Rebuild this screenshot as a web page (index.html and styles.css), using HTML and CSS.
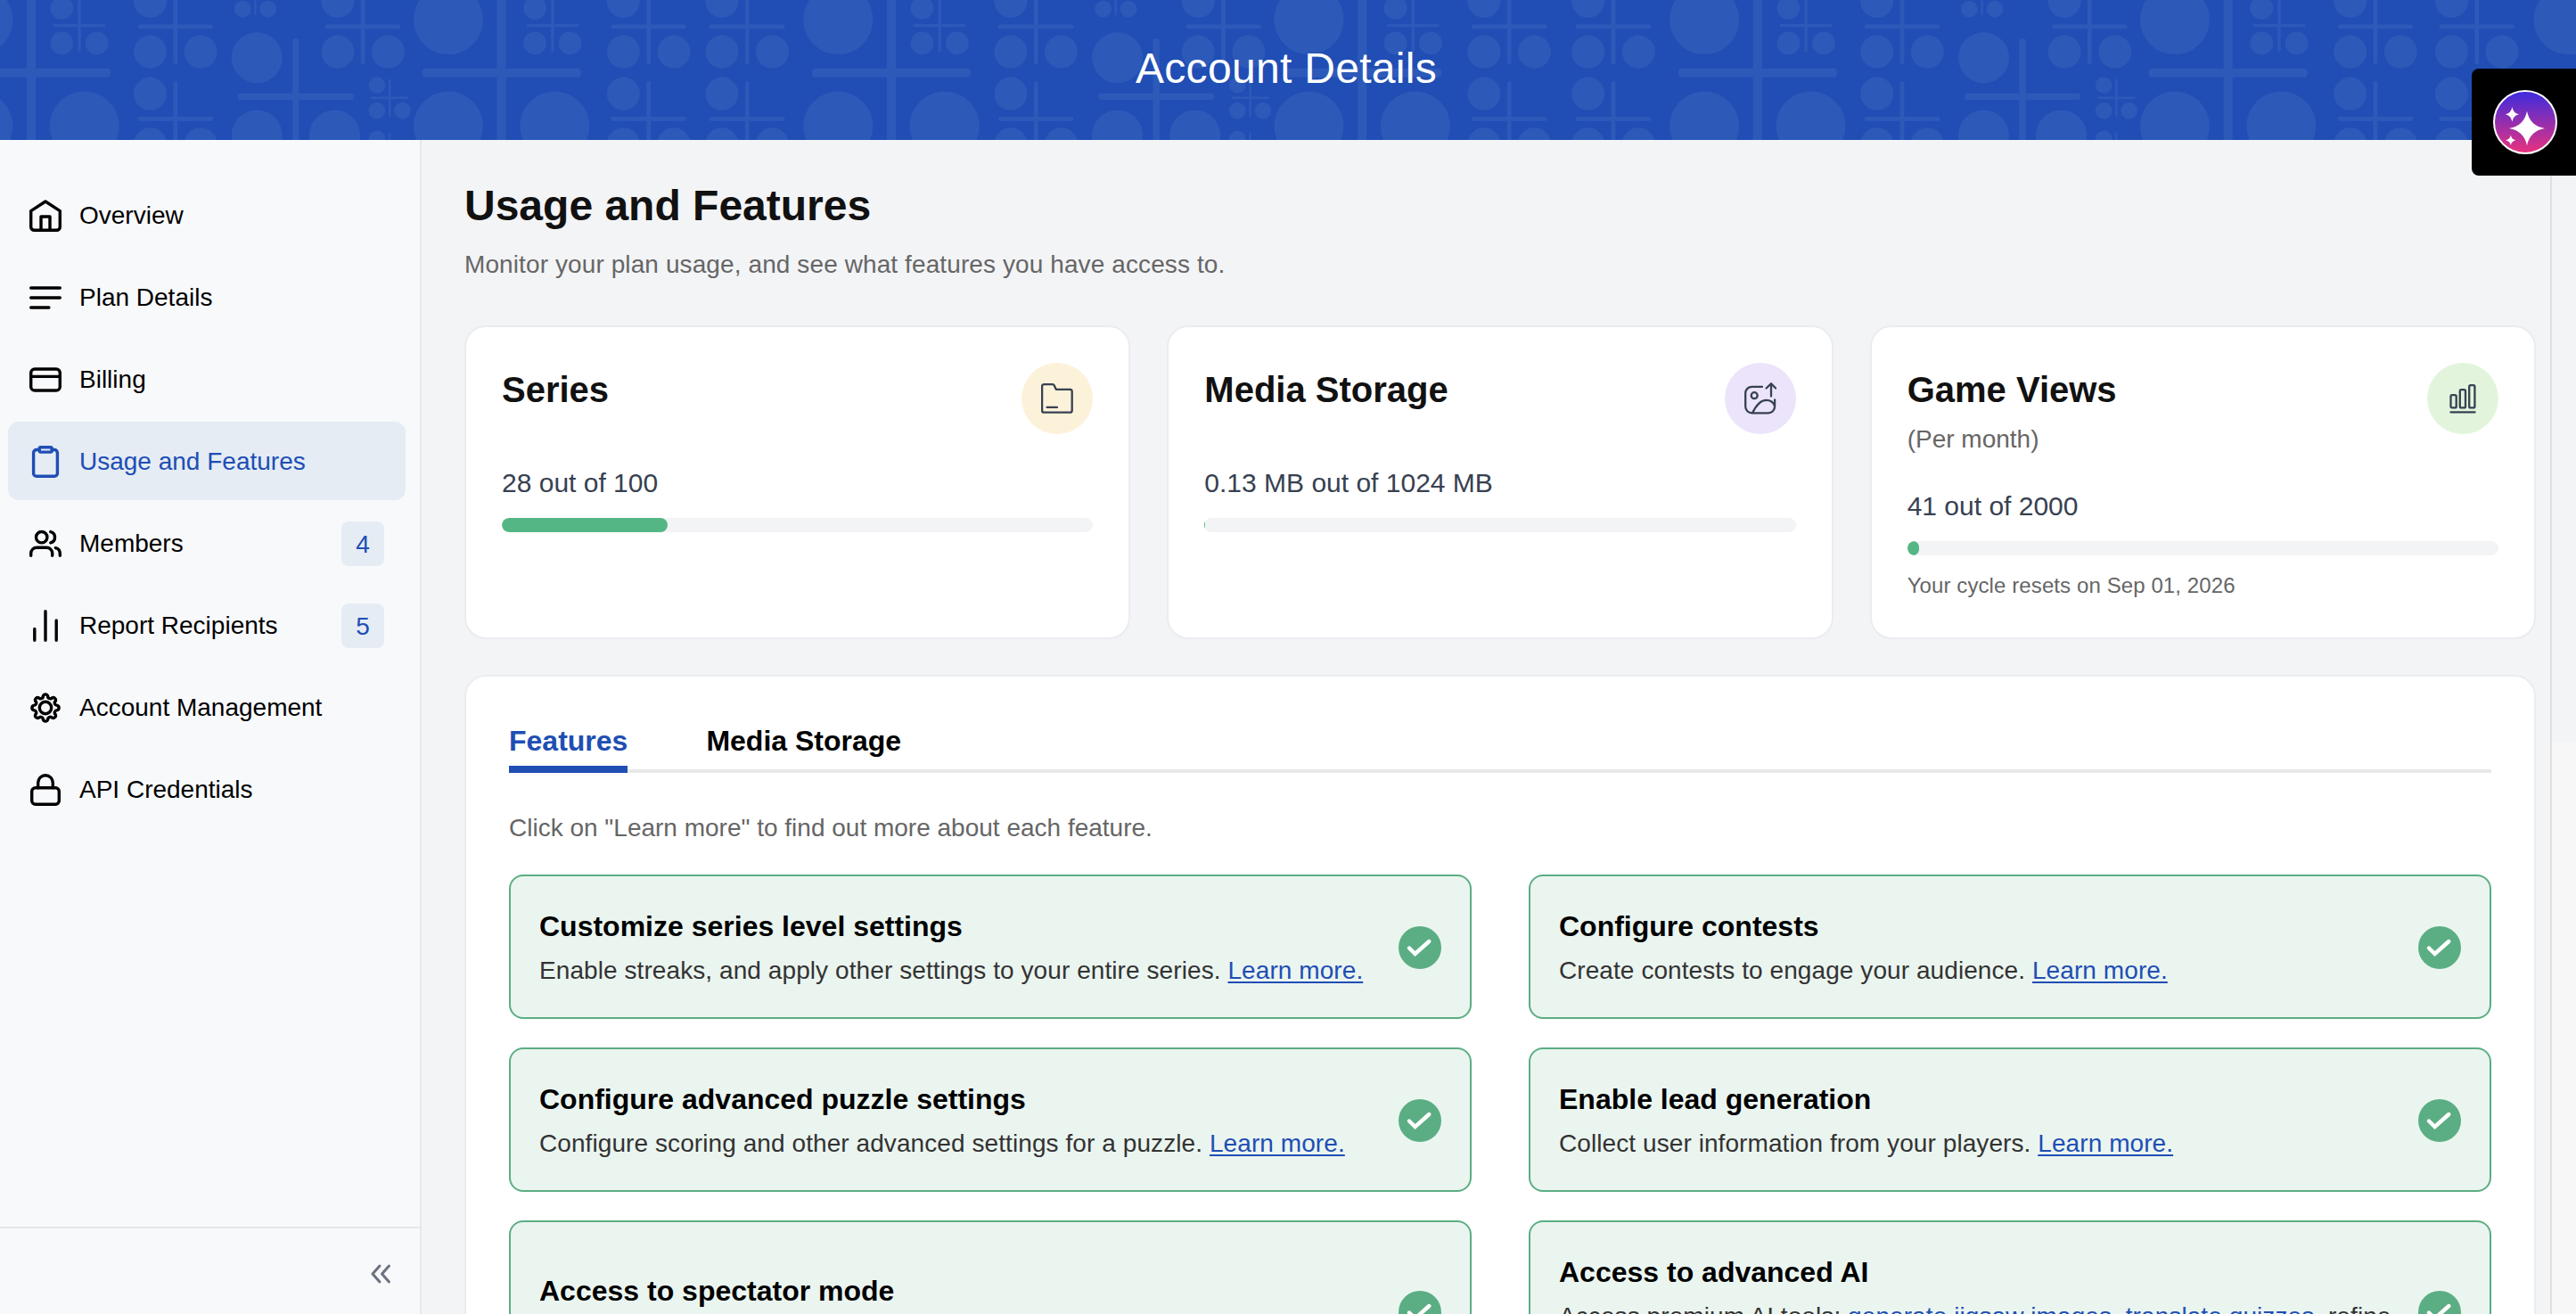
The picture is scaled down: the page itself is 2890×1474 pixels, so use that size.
FILE: index.html
```html
<!DOCTYPE html>
<html lang="en">
<head>
  <meta charset="UTF-8">
  <meta name="viewport" content="width=device-width, initial-scale=1.0">
  <title>Account Details</title>
  <link rel="stylesheet" href="styles.css">
</head>
<body>

  <header class="header">
    <svg class="header-pattern" width="2890" height="157" viewBox="0 0 2890 157">
      <defs>
        <g id="motif">
          <path d="M-5-85a4 4 0 0 1 4-4H1a4 4 0 0 1 4 4V-5H85a4 4 0 0 1 4 4V1a4 4 0 0 1-4 4H5V85a4 4 0 0 1-4 4H-1a4 4 0 0 1-4-4V5H-85a4 4 0 0 1-4-4V-1a4 4 0 0 1 4-4H-5z"/>
          <circle cx="-59.7" cy="-59.7" r="39"/>
          <circle cx="-59.7" cy="59.7" r="39"/>
          <circle cx="59.7" cy="59.7" r="39"/>
        </g>
        <g id="xl"><use href="#motif" transform="translate(0 81.8)"/></g>
        <g id="sm"><use href="#motif" transform="translate(0 28.7) scale(.33)"/></g>
        <g id="md"><use href="#motif" transform="translate(0 29.8) scale(.474)"/></g>
        <g id="md2"><use href="#md"/><use href="#md" y="103.6"/></g>
        <g id="lg"><use href="#motif" transform="translate(0 108.3) scale(.73)"/></g>
        <g id="xs"><use href="#motif" transform="translate(0 109.8) scale(.239)"/></g>
        <g id="cluster">
          <use href="#md2" x="0"/>
          <use href="#xs" x="89.6" y="-113.9"/>
          <use href="#lg" x="135"/>
          <use href="#md" x="210.4"/>
          <use href="#xs" x="240.4"/>
          <use href="#xs" x="240.4" y="60.2"/>
        </g>
      </defs>
      <g fill="#2d5ab9">
        <use href="#xl" x="35"/><use href="#sm" x="89"/><use href="#cluster" x="196.8"/>
        <use href="#xl" x="562.6"/><use href="#sm" x="619.8"/><use href="#md2" x="727.7"/><use href="#md2" x="838.2"/>
        <use href="#xl" x="1000"/><use href="#sm" x="1054.2"/><use href="#cluster" x="1162.2"/>
        <use href="#xl" x="1528.2"/><use href="#sm" x="1585.3"/><use href="#md2" x="1693.2"/><use href="#md2" x="1810"/>
        <use href="#xl" x="1971.8"/><use href="#sm" x="2026.2"/><use href="#cluster" x="2134"/>
        <use href="#xl" x="2499.6"/><use href="#sm" x="2557"/><use href="#md2" x="2665"/><use href="#md2" x="2778.7"/>
        <use href="#xl" x="2941.3"/>
      </g>
    </svg>
    <div class="header-title">Account Details</div>
  </header>

  <div class="layout">
    <aside class="sidebar">
      <nav class="nav">
        <a class="nav-item">
          <svg class="icon" viewBox="0 0 36 36"><path d="M1.7 12.6 18 2l16.3 10.6v17.9a3.8 3.8 0 0 1-3.8 3.8h-25a3.8 3.8 0 0 1-3.8-3.8zM13 34.3V19h10v15.3"/></svg>
          Overview
        </a>
        <a class="nav-item">
          <svg class="icon" viewBox="0 0 36 36"><path d="M1.7 7h32.6M1.7 18h32.6M1.7 29h20.2"/></svg>
          Plan Details
        </a>
        <a class="nav-item">
          <svg class="icon" viewBox="0 0 36 36"><rect x="1.7" y="6" width="32.6" height="24" rx="4.3"/><path d="M2 14.4h32"/></svg>
          Billing
        </a>
        <a class="nav-item active">
          <svg class="icon" viewBox="0 0 36 36"><path d="M10.8 4.5H8a3.4 3.4 0 0 0-3.4 3.4v23A3.4 3.4 0 0 0 8 34.3h20a3.4 3.4 0 0 0 3.4-3.4v-23A3.4 3.4 0 0 0 28 4.5h-2.8"/><rect x="11.2" y="1.7" width="14" height="5.4" rx="1.5"/></svg>
          Usage and Features
        </a>
        <a class="nav-item">
          <svg class="icon" viewBox="0 0 36 36"><circle cx="13.7" cy="10.7" r="6.2"/><path d="M1.7 31.3v-2.6a6.5 6.5 0 0 1 6.5-6.5h11a6.5 6.5 0 0 1 6.5 6.5v2.6M23.8 4.6a6.3 6.3 0 0 1 0 12.2M29.3 22.7a6.5 6.5 0 0 1 5 6.3v2.3"/></svg>
          Members
          <span class="count">4</span>
        </a>
        <a class="nav-item">
          <svg class="icon" viewBox="0 0 36 36"><path d="M5.8 21.4v12.9M18 1.7v32.6M30.2 12v22.3"/></svg>
          Report Recipients
          <span class="count">5</span>
        </a>
        <a class="nav-item">
          <svg class="icon" viewBox="0 0 36 36"><circle cx="18" cy="18" r="6.7"/><path d="M31.24 15.37A2.8 2.8 0 0 1 31.24 20.63A2.8 2.8 0 0 0 29.22 25.5A2.8 2.8 0 0 1 25.5 29.22A2.8 2.8 0 0 0 20.63 31.24A2.8 2.8 0 0 1 15.37 31.24A2.8 2.8 0 0 0 10.5 29.22A2.8 2.8 0 0 1 6.78 25.5A2.8 2.8 0 0 0 4.76 20.63A2.8 2.8 0 0 1 4.76 15.37A2.8 2.8 0 0 0 6.78 10.5A2.8 2.8 0 0 1 10.5 6.78A2.8 2.8 0 0 0 15.37 4.76A2.8 2.8 0 0 1 20.63 4.76A2.8 2.8 0 0 0 25.5 6.78A2.8 2.8 0 0 1 29.22 10.5A2.8 2.8 0 0 0 31.24 15.37z"/></svg>
          Account Management
        </a>
        <a class="nav-item">
          <svg class="icon" viewBox="0 0 36 36"><rect x="2.7" y="15.8" width="30.6" height="18.5" rx="4"/><path d="M9.7 15.8V10a8.3 8.3 0 0 1 16.6 0v5.8"/></svg>
          API Credentials
        </a>
      </nav>
      <div class="sidebar-footer">
        <svg class="collapse" width="26" height="24" viewBox="0 0 26 24"><path d="M12 3 4 12l8 9M22.5 3l-8 9 8 9"/></svg>
      </div>
    </aside>

    <main class="main">
      <h1>Usage and Features</h1>
      <p class="subtitle">Monitor your plan usage, and see what features you have access to.</p>

      <div class="stats">
        <div class="stat">
          <div class="stat-head">
            <h2>Series</h2>
            <span class="stat-icon yellow">
              <svg width="36" height="34" viewBox="0 0 36 34"><path d="M3.4 1.2h9.4q1.4 0 2 1.3l2 4.3h15.6a2.3 2.3 0 0 1 2.3 2.3v21.3a2.3 2.3 0 0 1-2.3 2.3h-29a2.3 2.3 0 0 1-2.3-2.3V3.5a2.3 2.3 0 0 1 2.3-2.3zM6.5 26.8H18"/></svg>
            </span>
          </div>
          <div class="usage">28 out of 100</div>
          <div class="bar"><div class="bar-fill" style="width: 28%"></div></div>
        </div>

        <div class="stat">
          <div class="stat-head">
            <h2>Media Storage</h2>
            <span class="stat-icon purple">
              <svg width="36" height="36" viewBox="0 0 36 36"><path d="M20 4.8H8.5a7.3 7.3 0 0 0-7.3 7.3v15a7.3 7.3 0 0 0 7.3 7.3h18.3a7.3 7.3 0 0 0 7.3-7.3V19.5M9 34.2C13 26 19 19.8 24.6 19.8c4.4 0 8 2.7 9.5 6.7M30 15.5V1.5M24.6 6.5 30 1.2l5.2 5.3"/><circle cx="11.2" cy="14.7" r="3.5"/></svg>
            </span>
          </div>
          <div class="usage">0.13 MB out of 1024 MB</div>
          <div class="bar"><div class="bar-fill" style="width: 0.013%"></div></div>
        </div>

        <div class="stat">
          <div class="stat-head">
            <div>
              <h2>Game Views</h2>
              <div class="per">(Per month)</div>
            </div>
            <span class="stat-icon green">
              <svg width="30" height="33" viewBox="0 0 30 33"><rect x="1.5" y="12.2" width="6.2" height="14.2" rx="1.5"/><rect x="11.8" y="6.2" width="6.2" height="20.2" rx="1.5"/><rect x="22.2" y="1.2" width="6.2" height="25.2" rx="1.5"/><path d="M1.5 31.4h27"/></svg>
            </span>
          </div>
          <div class="usage">41 out of 2000</div>
          <div class="bar"><div class="bar-fill" style="width: 2.05%"></div></div>
          <div class="cycle">Your cycle resets on Sep 01, 2026</div>
        </div>
      </div>

      <section class="panel">
        <div class="tabs">
          <a class="tab active">Features</a>
          <a class="tab">Media Storage</a>
        </div>
        <p class="hint">Click on "Learn more" to find out more about each feature.</p>

        <div class="features">
          <div class="feature">
            <div class="feature-text">
              <h3>Customize series level settings</h3>
              <p>Enable streaks, and apply other settings to your entire series. <a href="#">Learn more.</a></p>
            </div>
            <svg class="check" viewBox="0 0 48 48"><circle cx="24" cy="24" r="24"/><path d="M12 24.5l6.6 6.5L34.3 17"/></svg>
          </div>
          <div class="feature">
            <div class="feature-text">
              <h3>Configure contests</h3>
              <p>Create contests to engage your audience. <a href="#">Learn more.</a></p>
            </div>
            <svg class="check" viewBox="0 0 48 48"><circle cx="24" cy="24" r="24"/><path d="M12 24.5l6.6 6.5L34.3 17"/></svg>
          </div>
          <div class="feature">
            <div class="feature-text">
              <h3>Configure advanced puzzle settings</h3>
              <p>Configure scoring and other advanced settings for a puzzle. <a href="#">Learn more.</a></p>
            </div>
            <svg class="check" viewBox="0 0 48 48"><circle cx="24" cy="24" r="24"/><path d="M12 24.5l6.6 6.5L34.3 17"/></svg>
          </div>
          <div class="feature">
            <div class="feature-text">
              <h3>Enable lead generation</h3>
              <p>Collect user information from your players. <a href="#">Learn more.</a></p>
            </div>
            <svg class="check" viewBox="0 0 48 48"><circle cx="24" cy="24" r="24"/><path d="M12 24.5l6.6 6.5L34.3 17"/></svg>
          </div>
          <div class="feature">
            <div class="feature-text">
              <h3>Access to spectator mode</h3>
              <p>Let others follow a game as it is played. <a href="#">Learn more.</a></p>
            </div>
            <svg class="check" viewBox="0 0 48 48"><circle cx="24" cy="24" r="24"/><path d="M12 24.5l6.6 6.5L34.3 17"/></svg>
          </div>
          <div class="feature">
            <div class="feature-text">
              <h3>Access to advanced AI</h3>
              <p>Access premium AI tools: <a href="#">generate jigsaw images</a>, <a href="#">translate quizzes</a>, refine questions and more. <a href="#">Learn more.</a></p>
            </div>
            <svg class="check" viewBox="0 0 48 48"><circle cx="24" cy="24" r="24"/><path d="M12 24.5l6.6 6.5L34.3 17"/></svg>
          </div>
        </div>
      </section>
    </main>

    <div class="gutter"><div class="gutter-top"></div></div>
  </div>

  <!-- floating AI assistant button -->
  <div class="assistant">
    <svg width="72" height="72" viewBox="0 0 72 72">
      <defs>
        <linearGradient id="glow" x1="0" y1="0" x2="0" y2="1">
          <stop offset="0" stop-color="#3b2be0"/>
          <stop offset="1" stop-color="#ea327d"/>
        </linearGradient>
      </defs>
      <circle cx="36" cy="36" r="35" fill="url(#glow)" stroke="#fff" stroke-width="2"/>
      <g fill="#fff">
        <path d="M38 23.5Q41 40 58 43Q41 46 38 62.5Q35 46 18 43Q35 40 38 23.5z"/>
        <path d="M21.4 19Q22.6 26 29 27.3Q22.6 28.6 21.4 35.5Q20.2 28.6 13.8 27.3Q20.2 26 21.4 19z"/>
        <path d="M19.8 50.5Q20.7 55.4 25.5 56.3Q20.7 57.2 19.8 62Q18.9 57.2 14 56.3Q18.9 55.4 19.8 50.5z"/>
      </g>
    </svg>
  </div>

</body>
</html>
```

FILE: styles.css
```css
* {
  box-sizing: border-box;
}
body {
  margin: 0;
  height: 1474px;
  overflow: hidden;
  display: flex;
  flex-direction: column;
  font-family: "Liberation Sans", Arial, sans-serif;
  font-size: 28px;
  color: #000;
  background: #f3f4f6;
}
h1, h2, h3, p {
  margin: 0;
}
svg {
  display: block;
  flex-shrink: 0;
}

/* header */
.header {
  position: relative;
  flex: none;
  height: 157px;
  overflow: hidden;
  background: #204eb4;
  display: flex;
  justify-content: center;
}
.header-pattern {
  position: absolute;
  top: 0;
  left: 0;
}
.header-title {
  position: relative;
  padding: 49px 4px 0 0;
  color: #fff;
  font-size: 48px;
  line-height: 56px;
  letter-spacing: 0.3px;
}

.layout {
  flex: 1;
  min-height: 0;
  display: flex;
}

/* sidebar */
.sidebar {
  flex: none;
  width: 473px;
  display: flex;
  flex-direction: column;
  justify-content: space-between;
  background: #f8f9fb;
  border-right: 2px solid #e5e7ea;
}
.nav {
  display: flex;
  flex-direction: column;
  gap: 4px;
  padding: 40px 16px 0 9px;
}
.nav-item {
  display: flex;
  align-items: center;
  height: 88px;
  padding: 1px 24px 0;
  border-radius: 12px;
  line-height: 34px;
}
.nav-item.active {
  background: #e5ecf4;
  color: #204eb4;
}
.icon {
  width: 36px;
  height: 36px;
  margin-right: 20px;
  fill: none;
  stroke: currentColor;
  stroke-width: 3.4;
  stroke-linecap: round;
  stroke-linejoin: round;
}
.count {
  width: 48px;
  height: 50px;
  margin-left: auto;
  border-radius: 8px;
  background: #e5ecf4;
  color: #204eb4;
  line-height: 51px;
  text-align: center;
}
.sidebar-footer {
  display: flex;
  justify-content: flex-end;
  align-items: center;
  height: 98px;
  padding: 6px 31px 0 0;
  border-top: 2px solid #e5e7ea;
}
.collapse {
  fill: none;
  stroke: #6b7280;
  stroke-width: 3;
  stroke-linecap: round;
  stroke-linejoin: round;
}

/* main */
.main {
  flex: 1;
  min-width: 0;
  padding: 46px 16px 0 48px;
}
h1 {
  font-size: 48px;
  line-height: 56px;
  color: #111;
}
.subtitle {
  margin: 17px 0 47px;
  line-height: 42px;
  letter-spacing: 0.1px;
  color: #666;
}

.stats {
  display: grid;
  grid-template-columns: repeat(3, 1fr);
  gap: 41px;
}
.stat {
  height: 352px;
  padding: 40px;
  background: #fff;
  border: 2px solid #ebecf0;
  border-radius: 24px;
}
.stat-head {
  display: flex;
  justify-content: space-between;
  align-items: flex-start;
  margin-bottom: 32px;
}
h2 {
  margin-top: 6px;
  font-size: 40px;
  line-height: 48px;
  color: #111;
}
.per {
  margin-top: 11px;
  line-height: 41px;
  color: #666;
}
.stat-icon {
  display: flex;
  align-items: center;
  justify-content: center;
  width: 80px;
  height: 80px;
  border-radius: 50%;
}
.stat-icon svg {
  fill: none;
  stroke: #374151;
  stroke-width: 2.3;
  stroke-linecap: round;
  stroke-linejoin: round;
}
.yellow {
  background: #fcf2da;
}
.purple {
  background: #ece4fa;
}
.green {
  background: #e2f5dc;
}
.usage {
  margin-bottom: 16px;
  font-size: 30px;
  line-height: 46px;
  color: #374151;
}
.bar {
  height: 16px;
  border-radius: 8px;
  background: #f3f4f6;
  overflow: hidden;
}
.bar-fill {
  height: 16px;
  border-radius: 8px;
  background: #55b685;
}
.cycle {
  margin-top: 16px;
  font-size: 24px;
  line-height: 36px;
  letter-spacing: 0.1px;
  color: #666;
}

/* features panel */
.panel {
  margin-top: 40px;
  padding: 48px 48px 60px;
  background: #fff;
  border: 2px solid #ebecf0;
  border-radius: 24px;
}
.tabs {
  display: flex;
  gap: 88px;
  border-bottom: 4px solid #e8e8e8;
}
.tab {
  padding-bottom: 4px;
  margin-bottom: -4px;
  border-bottom: 8px solid transparent;
  font-size: 32px;
  font-weight: bold;
  line-height: 48px;
}
.tab.active {
  color: #204eb4;
  border-color: #204eb4;
}
.hint {
  margin: 41px 0 31px;
  line-height: 42px;
  color: #666;
}
.features {
  display: grid;
  grid-template-columns: 1fr 1fr;
  gap: 32px 64px;
}
.feature {
  display: flex;
  align-items: center;
  gap: 24px;
  padding: 31px 32px;
  background: #ebf5f0;
  border: 2px solid #5bae83;
  border-radius: 16px;
}
.feature-text {
  flex: 1;
}
h3 {
  margin-bottom: 4px;
  font-size: 32px;
  line-height: 50px;
}
.feature p {
  line-height: 42px;
  letter-spacing: 0.08px;
  color: #333;
}
.feature a {
  color: #204eb4;
  text-decoration-thickness: 2px;
  text-underline-offset: 3px;
  text-decoration-skip-ink: none;
}
.check {
  width: 48px;
  height: 48px;
  margin-top: 1px;
  fill: #5bae83;
}
.check path {
  fill: none;
  stroke: #fff;
  stroke-width: 4.4;
  stroke-linecap: round;
}

/* scroll gutter */
.gutter {
  flex: none;
  width: 29px;
  border-left: 2px solid #e0e0e3;
  background: #f7f7f8;
}
.gutter-top {
  height: 676px;
  background: #f3f4f6;
}

.assistant {
  position: absolute;
  top: 77px;
  right: 0;
  width: 117px;
  height: 120px;
  padding: 24px 0 0 24px;
  background: #000;
  border-radius: 8px 0 0 8px;
}
```
